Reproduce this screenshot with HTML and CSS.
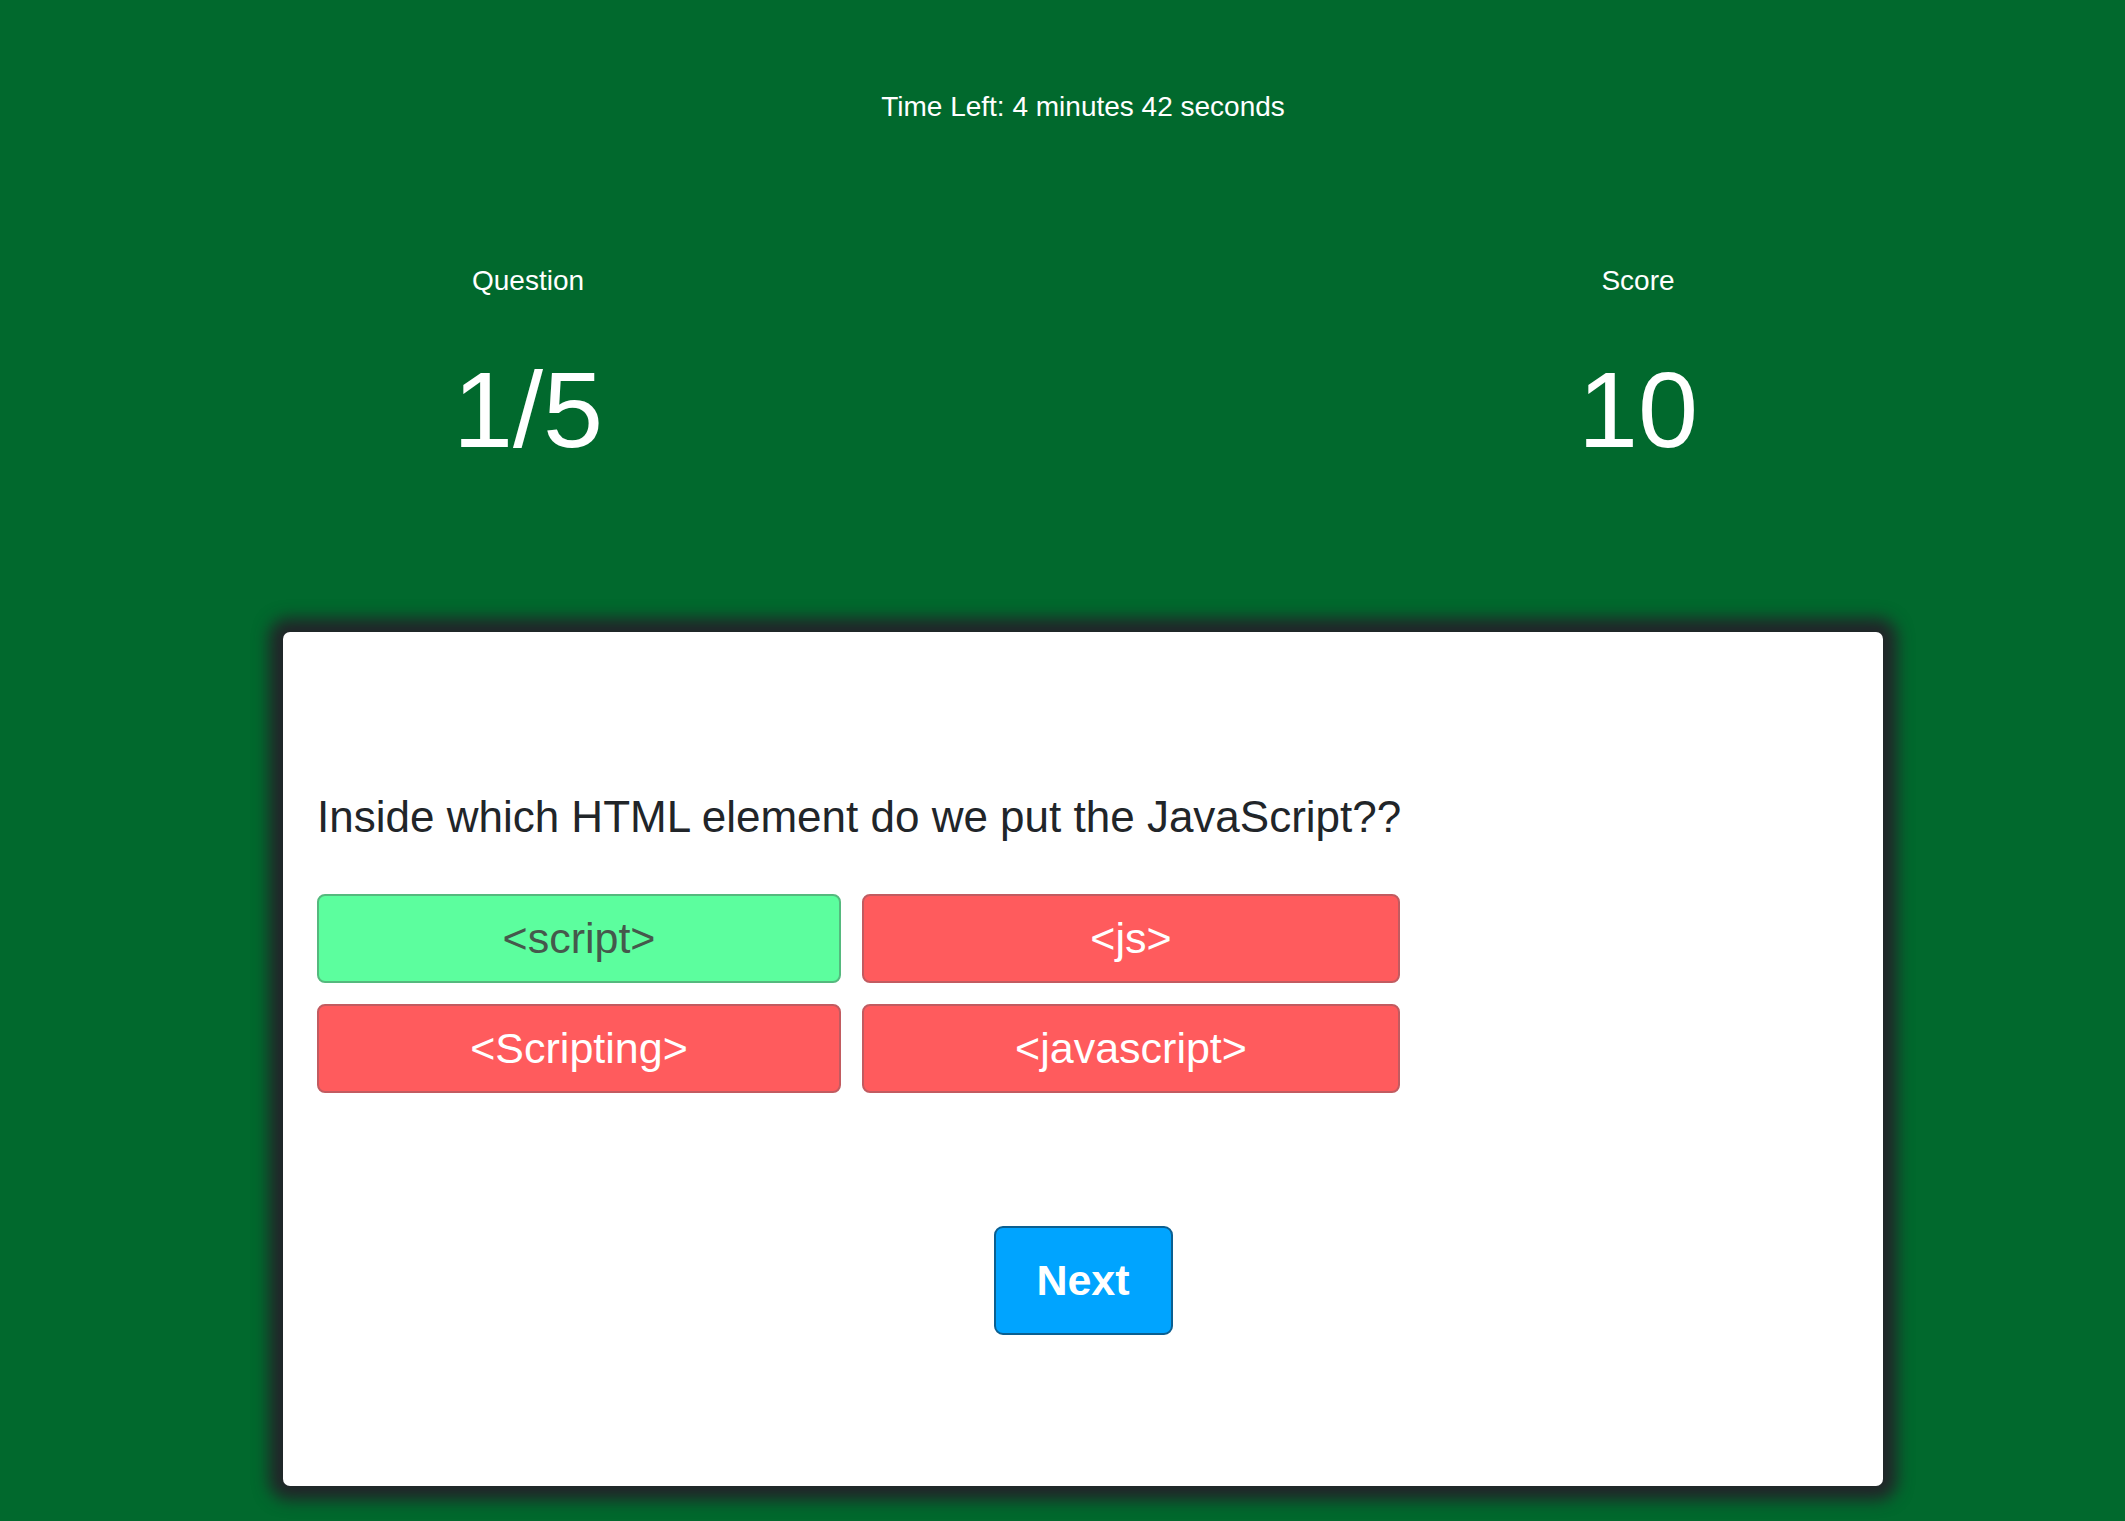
FILE: index.html
```html
<!DOCTYPE html>
<html lang="en">
<head>
<meta charset="utf-8">
<title>Quiz</title>
<link rel="stylesheet" href="styles.css">
</head>
<body>
<div class="page">
  <div class="timer">Time Left: 4 minutes 42 seconds</div>
  <div class="stats">
    <div class="stat">
      <div class="stat-label">Question</div>
      <div class="stat-value">1/5</div>
    </div>
    <div class="stat">
      <div class="stat-label">Score</div>
      <div class="stat-value">10</div>
    </div>
  </div>
  <div class="card">
    <h2 class="question">Inside which HTML element do we put the JavaScript??</h2>
    <div class="answers">
      <button class="answer correct">&lt;script&gt;</button>
      <button class="answer wrong">&lt;js&gt;</button>
      <button class="answer wrong">&lt;Scripting&gt;</button>
      <button class="answer wrong">&lt;javascript&gt;</button>
    </div>
    <div class="actions">
      <button class="next">Next</button>
    </div>
  </div>
</div>
</body>
</html>
```
FILE: styles.css
```css
html, body {
  margin: 0;
  padding: 0;
}
body {
  background: #01692d;
  font-family: "Liberation Sans", Arial, sans-serif;
  color: #ffffff;
  padding-left: 41px;
  min-height: 1521px;
  box-sizing: border-box;
}
.page {
  width: 1600px;
  margin: 0 auto;
  padding-top: 91px;
}
.timer {
  text-align: center;
  font-size: 28px;
  line-height: 32px;
}
.stats {
  display: flex;
  justify-content: space-between;
  margin-top: 142px;
}
.stat {
  width: 490px;
  text-align: center;
}
.stat-label {
  font-size: 28px;
  line-height: 32px;
}
.stat-value {
  font-size: 108px;
  line-height: 108px;
  margin-top: 59px;
}
.card {
  margin-top: 168px;
  background: #ffffff;
  border-radius: 7px;
  box-shadow: 0 0 16px 14px #212529;
  padding: 158px 34px 151px;
  color: #212529;
}
.question {
  margin: 0;
  font-size: 44px;
  font-weight: normal;
  line-height: 53px;
}
.answers {
  display: grid;
  grid-template-columns: 524px 538px;
  grid-auto-rows: 89px;
  gap: 21px;
  margin-top: 51px;
}
.answer {
  font-family: "Liberation Sans", Arial, sans-serif;
  font-size: 43px;
  border-radius: 8px;
  padding: 0;
  cursor: pointer;
}
.answer.correct {
  background: #5cfe9e;
  border: 2px solid #55b97e;
  color: #45594c;
}
.answer.wrong {
  background: #ff5b5d;
  border: 2px solid #c25b60;
  color: #ffffff;
}
.actions {
  display: flex;
  justify-content: center;
  margin-top: 133px;
}
.next {
  width: 179px;
  height: 109px;
  background: #00a4ff;
  border: 2px solid #0b5f91;
  border-radius: 9px;
  color: #ffffff;
  font-family: "Liberation Sans", Arial, sans-serif;
  font-weight: bold;
  font-size: 43px;
  padding: 0;
  cursor: pointer;
}
```
